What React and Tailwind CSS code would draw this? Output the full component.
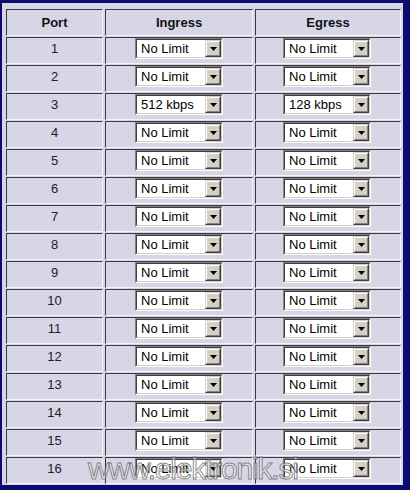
import React from "react";

// rate limit rows
const rows = Array.from({ length: 16 }, (_, i) => ({
  port: i + 1,
  ingress: i === 2 ? "512 kbps" : "No Limit",
  egress: i === 2 ? "128 kbps" : "No Limit",
}));

const Cell = ({ children, className = "" }) => (
  <div
    className={
      "h-[27px] border border-t-[#3a3a3a] border-l-[#3a3a3a] border-r-[#f2f2f8] border-b-[#f2f2f8] bg-[#d6d6e7] " +
      className
    }
  >
    {children}
  </div>
);

// classic windows combo box
const Combo = ({ value }) => (
  <div className="w-[88px] h-[21px] border border-t-[#808080] border-l-[#808080] border-r-white border-b-white">
    <div className="h-full flex border border-t-[#404040] border-l-[#404040] border-r-[#d4d0c8] border-b-[#d4d0c8] bg-white">
      <span className="flex-1 pl-[4px] text-[13px] leading-[17px] text-black">{value}</span>
      <div className="w-[16px] h-[17px] border border-t-[#d4d0c8] border-l-[#d4d0c8] border-r-[#404040] border-b-[#404040]">
        <div className="w-full h-full flex items-center justify-center bg-[#d4d0c8] border border-t-white border-l-white border-r-[#808080] border-b-[#808080]">
          <svg width="7" height="4" viewBox="0 0 7 4">
            <path d="M0 0H7L3.5 4Z" fill="#000" />
          </svg>
        </div>
      </div>
    </div>
  </div>
);

export default function App() {
  return (
    <div className="relative w-[410px] h-[490px] bg-[#d6d6e7] border-t-[3px] border-l-[2px] border-r-[7px] border-b-[5px] border-[#0c0c70] pt-[6px] pl-[4px] pr-[2px] pb-[1px] font-['Liberation_Sans',Arial,sans-serif]">
      <div className="grid grid-cols-[97px_148px_146px] gap-x-[2px] gap-y-[1px]">
        <Cell className="flex items-center justify-center text-[13px] font-bold text-[#111]">Port</Cell>
        <Cell className="flex items-center justify-center text-[13px] font-bold text-[#111]">Ingress</Cell>
        <Cell className="flex items-center justify-center text-[13px] font-bold text-[#111]">Egress</Cell>
        {rows.map((r) => (
          <React.Fragment key={r.port}>
            <Cell className="flex items-start justify-center pt-[3px] text-[13px] leading-[16px] text-[#222]">{r.port}</Cell>
            <Cell className="flex justify-center">
              <Combo value={r.ingress} />
            </Cell>
            <Cell className="flex justify-center pr-[2px]">
              <Combo value={r.egress} />
            </Cell>
          </React.Fragment>
        ))}
      </div>
      {/* watermark */}
      <div className="absolute left-[86px] top-[449px] text-[30px] leading-[34px] tracking-[-1.2px] text-white/50 [-webkit-text-stroke:1px_rgba(100,100,100,0.75)] pointer-events-none">
        www.elektronik.si
      </div>
    </div>
  );
}
